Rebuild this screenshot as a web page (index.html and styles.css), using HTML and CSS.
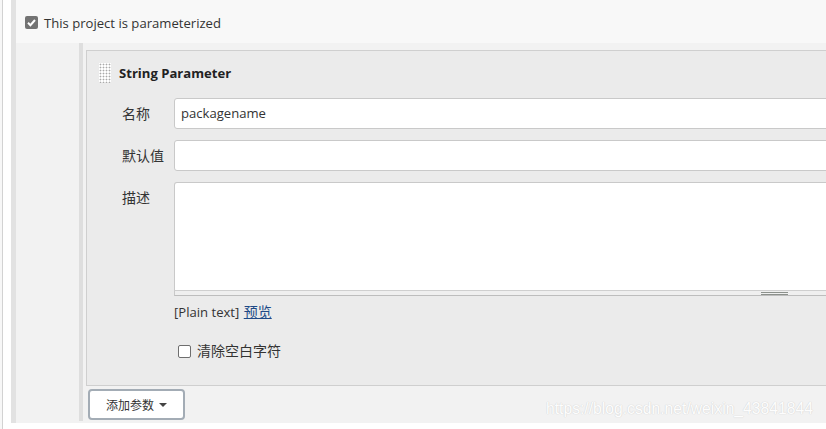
FILE: index.html
```html
<!DOCTYPE html>
<html lang="zh">
<head>
<meta charset="utf-8">
<link rel="stylesheet" href="styles.css">
</head>
<body>
<div class="outer">
  <div class="section">
    <div class="top-row">
      <span class="cb cb-checked"><svg width="13" height="13" viewBox="0 0 13 13"><path d="M3 6.8 L5.4 9.2 L10 4" fill="none" stroke="#fff" stroke-width="2"/></svg></span>
      <span class="top-label">This project is parameterized</span>
    </div>
    <div class="nested">
      <div class="panel">
        <div class="panel-head">
          <span class="grip"></span>
          <span class="panel-title">String Parameter</span>
        </div>
        <div class="row">
          <div class="label">名称</div>
          <div class="input">packagename</div>
        </div>
        <div class="row">
          <div class="label">默认值</div>
          <div class="input"></div>
        </div>
        <div class="row">
          <div class="label">描述</div>
          <div class="ta-wrap">
            <div class="textarea"></div>
            <div class="ta-handle"><span class="ta-grip"></span></div>
          </div>
        </div>
        <div class="row row-plain">
          <div class="label"></div>
          <div class="plain">[Plain text] <a class="preview" href="#">预览</a></div>
        </div>
        <div class="row row-check">
          <div class="label"></div>
          <div class="check-line"><span class="cb cb-empty"></span><span class="check-label">清除空白字符</span></div>
        </div>
      </div>
      <button class="add-btn">添加参数 <span class="caret"></span></button>
    </div>
  </div>
</div>
<div class="watermark">https://blog.csdn.net/weixin_43841844</div>
</body>
</html>
```
FILE: styles.css
```css
html, body {
  margin: 0;
  padding: 0;
  height: 100%;
  overflow: hidden;
  background: #f7f7f7;
  font-family: "Segoe UI", "Open Sans", "Noto Sans CJK SC", sans-serif;
  color: #333;
  font-size: 14px;
}
body { position: relative; }

.outer {
  margin-left: 2px;
  border-left: 1px solid #d2d2d2;
  background: #fff;
  padding-left: 8px;
  height: 429px;
}

.section {
  border-left: 5px solid #e2e2e2;
  background: #f2f2f2;
  height: 423px;
  overflow: hidden;
}

.top-row {
  height: 43px;
  background: #f8f8f8;
  display: flex;
  align-items: center;
  padding-left: 9px;
  padding-top: 2px;
  box-sizing: border-box;
}

.cb {
  display: inline-block;
  width: 13px;
  height: 13px;
  box-sizing: border-box;
  border-radius: 2px;
}
.cb-checked {
  background: #737373;
}
.cb-checked svg { display: block; }
.cb-empty {
  border: 1px solid #6e6e6e;
  background: #fff;
  border-radius: 2px;
}

.top-label {
  margin-left: 6px;
  font-size: 13.1px;
  color: #333;
}

.nested {
  margin-left: 63px;
  border-left: 4px solid #dedede;
  padding-top: 7px;
  padding-left: 3px;
  height: 371px;
}

.panel {
  border: 1px solid #cfcfcf;
  border-right: none;
  background: #ebebeb;
  height: 336px;
  box-sizing: border-box;
}

.panel-head {
  display: flex;
  align-items: center;
  padding: 12px 0 0 12px;
  height: 20px;
}

.grip {
  width: 12px;
  height: 20px;
  background-color: #fff;
  background-image: radial-gradient(circle, #a9a9a9 0.8px, transparent 1.1px);
  background-size: 3px 3px;
  background-position: 0 0;
}

.panel-title {
  margin-left: 8px;
  font-weight: bold;
  font-size: 13.1px;
  color: #222;
}

.row {
  display: flex;
  align-items: flex-start;
  margin-top: 11px;
}
.panel-head + .row { margin-top: 15px; }

.label {
  width: 52px;
  padding-left: 35px;
  flex: none;
  line-height: 31px;
  font-size: 14px;
  color: #333;
  font-family: "Noto Sans CJK SC", sans-serif;
}

.input {
  flex: 1;
  height: 31px;
  box-sizing: border-box;
  border: 1px solid #c9c9c9;
  border-radius: 3px;
  background: #fff;
  margin-right: -10px;
  padding-left: 6px;
  line-height: 29px;
  font-size: 13.1px;
  color: #333;
}

.ta-wrap {
  flex: 1;
  margin-right: -10px;
}
.textarea {
  height: 108px;
  box-sizing: border-box;
  border: 1px solid #c9c9c9;
  border-bottom: none;
  border-radius: 3px 3px 0 0;
  background: #fff;
}
.ta-handle {
  height: 6px;
  box-sizing: border-box;
  border-top: 1px solid #cfcfcf;
  border-bottom: 1px solid #bdbdbd;
  border-left: 1px solid #c9c9c9;
  background: #efefef;
  position: relative;
}
.ta-grip {
  position: absolute;
  left: 586px;
  top: 1px;
  width: 27px;
  height: 3px;
  box-sizing: border-box;
  border-top: 1px solid #8c918c;
  border-bottom: 1px solid #8c918c;
}

.row-plain { margin-top: 6px; }
.plain {
  font-size: 13.1px;
  line-height: 18px;
  color: #333;
}
.preview {
  color: #204a87;
  text-decoration: underline;
  margin-left: 1px;
  font-size: 14px;
  font-family: "Noto Sans CJK SC", sans-serif;
}

.row-check { margin-top: 19px; }
.check-line {
  display: flex;
  align-items: center;
  padding-left: 4px;
  height: 20px;
}
.check-line .cb { margin-top: 3px; }
.check-label {
  margin-left: 6px;
  font-family: "Noto Sans CJK SC", sans-serif;
  font-size: 14px;
  color: #333;
}

.add-btn {
  display: flex;
  align-items: center;
  justify-content: center;
  margin: 3px 0 0 2px;
  width: 97px;
  height: 31px;
  box-sizing: border-box;
  border: 2px solid #a3acb5;
  border-radius: 4px;
  background: #fff;
  font-family: "Noto Sans CJK SC", sans-serif;
  font-size: 12px;
  color: #333;
  padding: 0;
}
.caret {
  display: inline-block;
  margin-left: 5px;
  width: 0;
  height: 0;
  border-left: 4px solid transparent;
  border-right: 4px solid transparent;
  border-top: 4px solid #444;
}

.watermark {
  position: absolute;
  left: 546px;
  top: 400px;
  font-family: "Liberation Sans", Arial, sans-serif;
  font-size: 15.7px;
  color: #fdfdfd;
  text-shadow: 0 0 1px #d4d4d4, 0 0 1px #d4d4d4;
}
```
